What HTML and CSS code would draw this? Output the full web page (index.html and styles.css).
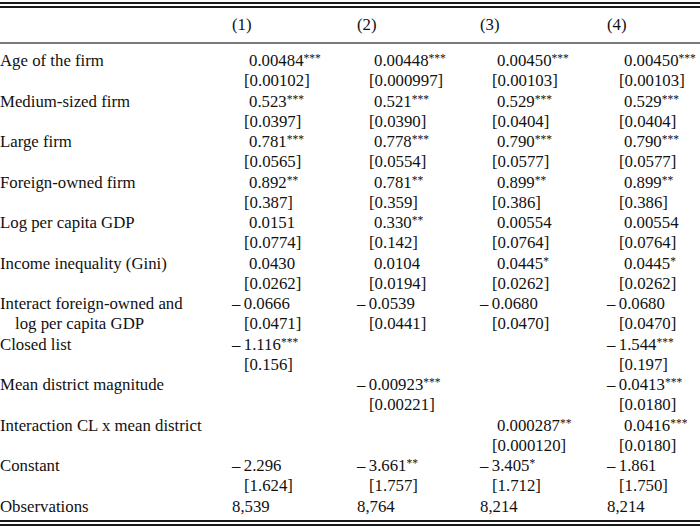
FILE: index.html
```html
<!DOCTYPE html>
<html lang="en">
<head>
<meta charset="utf-8">
<title>Regression table</title>
<link rel="stylesheet" href="styles.css">
</head>
<body>
<div class="wrap">
  <div class="rule-heavy"></div>
  <div class="rule-heavy second"></div>
  <table class="reg">
    <colgroup>
      <col class="w-label"><col class="w-1"><col class="w-2"><col class="w-3"><col class="w-4">
    </colgroup>
    <thead>
      <tr class="head"><th></th><th>(1)</th><th>(2)</th><th>(3)</th><th>(4)</th></tr>
    </thead>
    <tbody>
      <tr class="co"><td>Age of the firm</td><td class="c">0.00484<sup>***</sup></td><td class="c">0.00448<sup>***</sup></td><td class="c">0.00450<sup>***</sup></td><td class="c">0.00450<sup>***</sup></td></tr>
      <tr class="se"><td></td><td class="s">[0.00102]</td><td class="s">[0.000997]</td><td class="s">[0.00103]</td><td class="s">[0.00103]</td></tr>
      <tr class="co"><td>Medium-sized firm</td><td class="c">0.523<sup>***</sup></td><td class="c">0.521<sup>***</sup></td><td class="c">0.529<sup>***</sup></td><td class="c">0.529<sup>***</sup></td></tr>
      <tr class="se"><td></td><td class="s">[0.0397]</td><td class="s">[0.0390]</td><td class="s">[0.0404]</td><td class="s">[0.0404]</td></tr>
      <tr class="co"><td>Large firm</td><td class="c">0.781<sup>***</sup></td><td class="c">0.778<sup>***</sup></td><td class="c">0.790<sup>***</sup></td><td class="c">0.790<sup>***</sup></td></tr>
      <tr class="se"><td></td><td class="s">[0.0565]</td><td class="s">[0.0554]</td><td class="s">[0.0577]</td><td class="s">[0.0577]</td></tr>
      <tr class="co"><td>Foreign-owned firm</td><td class="c">0.892<sup>**</sup></td><td class="c">0.781<sup>**</sup></td><td class="c">0.899<sup>**</sup></td><td class="c">0.899<sup>**</sup></td></tr>
      <tr class="se"><td></td><td class="s">[0.387]</td><td class="s">[0.359]</td><td class="s">[0.386]</td><td class="s">[0.386]</td></tr>
      <tr class="co"><td>Log per capita GDP</td><td class="c">0.0151</td><td class="c">0.330<sup>**</sup></td><td class="c">0.00554</td><td class="c">0.00554</td></tr>
      <tr class="se"><td></td><td class="s">[0.0774]</td><td class="s">[0.142]</td><td class="s">[0.0764]</td><td class="s">[0.0764]</td></tr>
      <tr class="co"><td>Income inequality (Gini)</td><td class="c">0.0430</td><td class="c">0.0104</td><td class="c">0.0445<sup>*</sup></td><td class="c">0.0445<sup>*</sup></td></tr>
      <tr class="se"><td></td><td class="s">[0.0262]</td><td class="s">[0.0194]</td><td class="s">[0.0262]</td><td class="s">[0.0262]</td></tr>
      <tr class="co"><td>Interact foreign-owned and</td><td class="n">&ndash;&thinsp;0.0666</td><td class="n">&ndash;&thinsp;0.0539</td><td class="n">&ndash;&thinsp;0.0680</td><td class="n">&ndash;&thinsp;0.0680</td></tr>
      <tr class="se"><td class="indent">log per capita GDP</td><td class="s">[0.0471]</td><td class="s">[0.0441]</td><td class="s">[0.0470]</td><td class="s">[0.0470]</td></tr>
      <tr class="co"><td>Closed list</td><td class="n">&ndash;&thinsp;1.116<sup>***</sup></td><td></td><td></td><td class="n">&ndash;&thinsp;1.544<sup>***</sup></td></tr>
      <tr class="se"><td></td><td class="s">[0.156]</td><td></td><td></td><td class="s">[0.197]</td></tr>
      <tr class="co"><td>Mean district magnitude</td><td></td><td class="n">&ndash;&thinsp;0.00923<sup>***</sup></td><td></td><td class="n">&ndash;&thinsp;0.0413<sup>***</sup></td></tr>
      <tr class="se"><td></td><td></td><td class="s">[0.00221]</td><td></td><td class="s">[0.0180]</td></tr>
      <tr class="co"><td>Interaction CL x mean district</td><td></td><td></td><td class="c">0.000287<sup>**</sup></td><td class="c">0.0416<sup>***</sup></td></tr>
      <tr class="se"><td></td><td></td><td></td><td class="s">[0.000120]</td><td class="s">[0.0180]</td></tr>
      <tr class="co"><td>Constant</td><td class="n">&ndash;&thinsp;2.296</td><td class="n">&ndash;&thinsp;3.661<sup>**</sup></td><td class="n">&ndash;&thinsp;3.405<sup>*</sup></td><td class="n">&ndash;&thinsp;1.861</td></tr>
      <tr class="se"><td></td><td class="s">[1.624]</td><td class="s">[1.757]</td><td class="s">[1.712]</td><td class="s">[1.750]</td></tr>
      <tr class="co last"><td>Observations</td><td>8,539</td><td>8,764</td><td>8,214</td><td>8,214</td></tr>
    </tbody>
  </table>
  <div class="rule-heavy bottom"></div>
  <div class="rule-heavy second"></div>
</div>
</body>
</html>
```

FILE: styles.css
```css
html, body {
  margin: 0;
  padding: 0;
  background: #ffffff;
}

body {
  font-family: "Liberation Serif", "Times New Roman", serif;
  font-size: 16.8px;
  color: #111111;
}

.wrap {
  width: 700px;
  padding-top: 2px;
}

.rule-heavy {
  height: 2px;
  background: #1a1a1a;
}

.rule-heavy.second {
  margin-top: 2px;
}

.rule-heavy.bottom {
  margin-top: 3px;
}

.reg {
  width: 700px;
  border-collapse: collapse;
  table-layout: fixed;
}

.w-label { width: 232px; }
.w-1 { width: 125px; }
.w-2 { width: 123px; }
.w-3 { width: 127px; }
.w-4 { width: 93px; }

.reg th,
.reg td {
  padding: 0;
  text-align: left;
  font-weight: normal;
  white-space: nowrap;
  vertical-align: top;
}

.head th {
  height: 33px;
  line-height: 34px;
  border-bottom: 2px solid #7a7a7a;
}

.reg tbody tr:first-child td {
  padding-top: 6px;
}

.co td {
  height: 21px;
  line-height: 21px;
}

.se td {
  height: 19.5px;
  line-height: 19.5px;
}

.reg td.c { padding-left: 17px; }
.reg td.s { padding-left: 12px; }
.reg td.n { padding-left: 0; }
.reg td.indent { padding-left: 15px; }

sup {
  font-size: 11.5px;
  line-height: 0;
  vertical-align: 4px;
}
```
